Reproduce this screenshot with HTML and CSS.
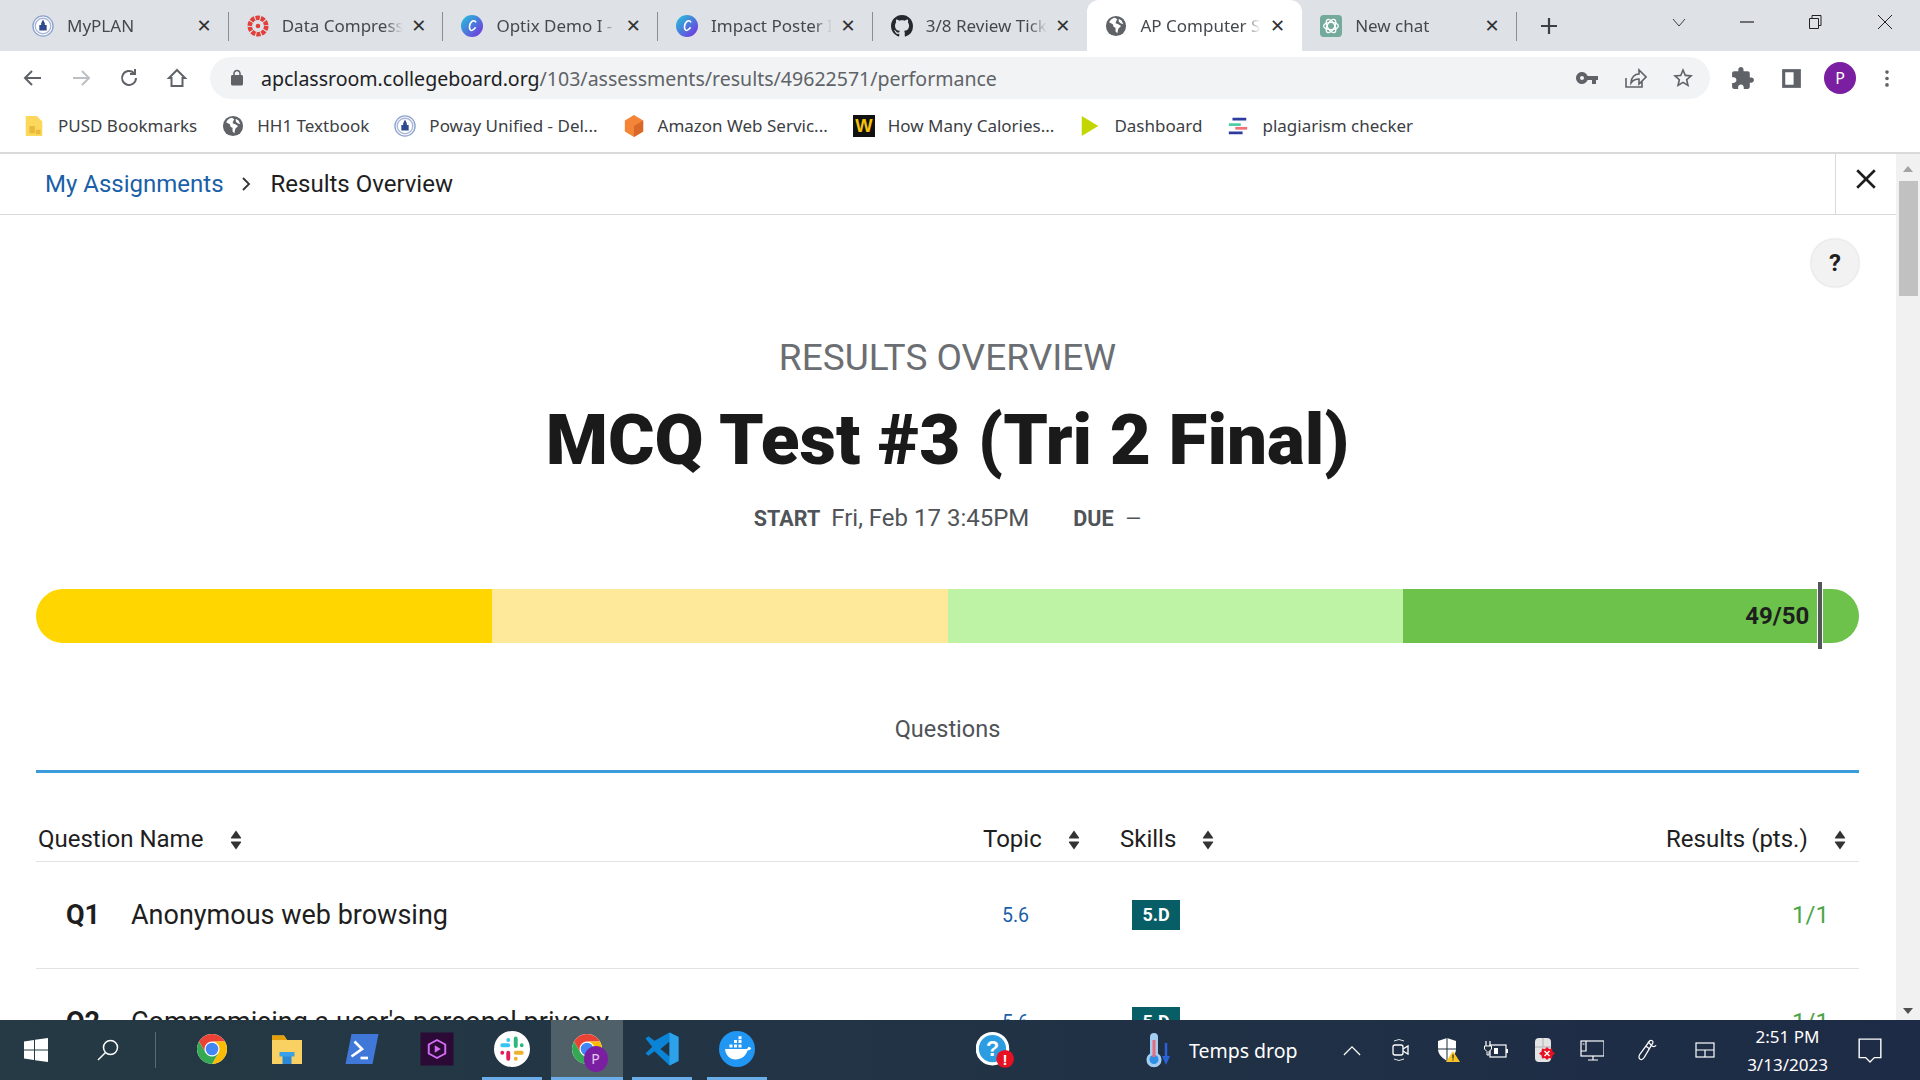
FILE: index.html
```html
<!DOCTYPE html>
<html lang="en">
<head>
    <meta charset="UTF-8">
    <meta name="viewport" content="width=device-width, initial-scale=1.0">
    <title>Results Overview</title>
    <link rel="stylesheet" href="styles.css">
</head>
<body>
    <svg class="defs" width="0" height="0">
        <symbol id="globe" viewBox="0 0 24 24">
            <circle cx="12" cy="12" r="11" fill="#5f6368"/>
            <path d="M11 3c-3 .5-5.5 2.5-6.5 5l4 2 1 3 2 1v4l2 2 1-5 3-3-3-2-3-1 1-3 1-1z" fill="#fff"/>
            <path d="M15 4l3 2 2 4-3-1-2-2z" fill="#fff"/>
        </symbol>
        <symbol id="seal" viewBox="0 0 24 24">
            <circle cx="12" cy="12" r="11" fill="#fff" stroke="#8fa3cf" stroke-width="1.5"/>
            <circle cx="12" cy="12" r="8.5" fill="none" stroke="#a9b7d8" stroke-width="1.5"/>
            <path d="M12 5l2 4v2h2v6H8v-6h2V9z" fill="#2f4a8f"/>
        </symbol>
        <symbol id="canva" viewBox="0 0 24 24">
            <defs>
                <linearGradient id="canva-fill" x1="0" y1="0" x2="1" y2="1">
                    <stop offset="0" stop-color="#1fc8d8"/>
                    <stop offset="1" stop-color="#7a2be0"/>
                </linearGradient>
            </defs>
            <circle cx="12" cy="12" r="12" fill="url(#canva-fill)"/>
            <path d="M16 7.5c-1-2-3.5-1.5-5 .5-2 2.5-2.5 7-.5 8.5 1.5 1 3.5-.5 5-2.5" fill="none" stroke="#fff" stroke-width="1.8" stroke-linecap="round"/>
        </symbol>
        <symbol id="chrome" viewBox="0 0 24 24">
            <circle cx="12" cy="12" r="10" fill="#fff"/>
            <path d="M3.34 7A10 10 0 0 1 20.66 7H12A5 5 0 0 0 7.67 14.5z" fill="#ea4335"/>
            <path d="M12 7H20.66A10 10 0 0 1 12 22L16.33 14.5A5 5 0 0 0 12 7z" fill="#fbbc04"/>
            <path d="M3.34 7L7.67 14.5A5 5 0 0 0 16.33 14.5L12 22A10 10 0 0 1 3.34 7z" fill="#34a853"/>
            <circle cx="12" cy="12" r="4.2" fill="#4285f4"/>
        </symbol>
        <symbol id="sort" viewBox="0 0 12 20">
            <path d="M6 .5L11 7.5Q11.5 8.5 10.5 8.5H1.5Q.5 8.5 1 7.5z" fill="#333"/>
            <path d="M6 19.5L11 12.5Q11.5 11.5 10.5 11.5H1.5Q.5 11.5 1 12.5z" fill="#333"/>
        </symbol>
    </svg>

    <div class="tabstrip">
        <div class="tab sep">
            <svg class="favicon"><use href="#seal"/></svg>
            <span class="tab-title">MyPLAN</span>
            <span class="tab-close">✕</span>
        </div>
        <div class="tab sep">
            <svg class="favicon" viewBox="0 0 24 24">
                <circle cx="12" cy="12" r="9" fill="none" stroke="#e0413a" stroke-width="5" stroke-dasharray="4.5 1.15"/>
                <circle cx="12" cy="12" r="2.5" fill="#e0413a"/>
            </svg>
            <span class="tab-title">Data Compress</span>
            <span class="tab-close">✕</span>
        </div>
        <div class="tab sep">
            <svg class="favicon"><use href="#canva"/></svg>
            <span class="tab-title">Optix Demo I -</span>
            <span class="tab-close">✕</span>
        </div>
        <div class="tab sep">
            <svg class="favicon"><use href="#canva"/></svg>
            <span class="tab-title">Impact Poster I</span>
            <span class="tab-close">✕</span>
        </div>
        <div class="tab">
            <svg class="favicon" viewBox="0 0 16 16">
                <path fill="#24292f" d="M8 0C3.58 0 0 3.58 0 8c0 3.54 2.29 6.53 5.47 7.59.4.07.55-.17.55-.38 0-.19-.01-.82-.01-1.49-2.01.37-2.53-.49-2.69-.94-.09-.23-.48-.94-.82-1.13-.28-.15-.68-.52-.01-.53.63-.01 1.08.58 1.23.82.72 1.21 1.87.87 2.33.66.07-.52.28-.87.51-1.07-1.78-.2-3.64-.89-3.64-3.95 0-.87.31-1.59.82-2.15-.08-.2-.36-1.02.08-2.12 0 0 .67-.21 2.2.82.64-.18 1.32-.27 2-.27.68 0 1.36.09 2 .27 1.53-1.04 2.2-.82 2.2-.82.44 1.1.16 1.92.08 2.12.51.56.82 1.27.82 2.15 0 3.07-1.87 3.75-3.65 3.95.29.25.54.73.54 1.48 0 1.07-.01 1.93-.01 2.2 0 .21.15.46.55.38A8.013 8.013 0 0016 8c0-4.42-3.58-8-8-8z"/>
            </svg>
            <span class="tab-title">3/8 Review Tick</span>
            <span class="tab-close">✕</span>
        </div>
        <div class="tab active">
            <svg class="favicon"><use href="#globe"/></svg>
            <span class="tab-title">AP Computer S</span>
            <span class="tab-close">✕</span>
        </div>
        <div class="tab sep">
            <svg class="favicon" viewBox="0 0 24 24">
                <rect width="24" height="24" rx="4" fill="#74aa9c"/>
                <g fill="none" stroke="#fff" stroke-width="1.4">
                    <ellipse cx="12" cy="12" rx="8" ry="4"/>
                    <ellipse cx="12" cy="12" rx="8" ry="4" transform="rotate(60 12 12)"/>
                    <ellipse cx="12" cy="12" rx="8" ry="4" transform="rotate(120 12 12)"/>
                </g>
            </svg>
            <span class="tab-title">New chat</span>
            <span class="tab-close">✕</span>
        </div>
        <svg class="new-tab" viewBox="0 0 18 18">
            <path d="M9 1v16M1 9h16" stroke="#3c4043" stroke-width="2.2"/>
        </svg>
        <div class="window-btns">
            <svg viewBox="0 0 14 14"><path d="M1 4l6 7 6-7" fill="none" stroke="#3c4043"/></svg>
            <svg viewBox="0 0 14 14"><path d="M0 7h14" stroke="#222" stroke-width="1.2"/></svg>
            <svg viewBox="0 0 14 14"><path d="M1.5 3.5h9v10h-9zM4 3.5v-3h9v10h-2.5" fill="none" stroke="#222"/></svg>
            <svg viewBox="0 0 14 14"><path d="M0 0l14 14M14 0L0 14" stroke="#222"/></svg>
        </div>
    </div>

    <div class="toolbar">
        <svg class="nav-icon" viewBox="0 0 24 24"><path d="M20 12H5M11 5l-7 7 7 7" fill="none" stroke="#5f6368" stroke-width="2"/></svg>
        <svg class="nav-icon" viewBox="0 0 24 24"><path d="M4 12h15M13 5l7 7-7 7" fill="none" stroke="#bcc0c4" stroke-width="2"/></svg>
        <svg class="nav-icon" viewBox="0 0 24 24"><path d="M19 12a7 7 0 1 1-2.1-5M18 3v5h-5" fill="none" stroke="#5f6368" stroke-width="2"/></svg>
        <svg class="nav-icon" viewBox="0 0 24 24"><path d="M12 4l8 8h-2.5v8h-11v-8H4z" fill="none" stroke="#5f6368" stroke-width="2"/></svg>
        <div class="omnibox">
            <svg class="lock" viewBox="0 0 24 24"><path fill="#5f6368" d="M18 8h-1V6c0-2.76-2.24-5-5-5S7 3.24 7 6v2H6c-1.1 0-2 .9-2 2v10c0 1.1.9 2 2 2h12c1.1 0 2-.9 2-2V10c0-1.1-.9-2-2-2zM9 6c0-1.66 1.34-3 3-3s3 1.34 3 3v2H9V6z"/></svg>
            <span class="url"><b>apclassroom.collegeboard.org</b>/103/assessments/results/49622571/performance</span>
            <svg class="omni-icon" viewBox="0 0 24 24"><path fill="#5f6368" d="M12.65 10C11.83 7.67 9.61 6 7 6c-3.31 0-6 2.69-6 6s2.69 6 6 6c2.61 0 4.83-1.67 5.65-4H17v4h4v-4h2v-4H12.65zM7 14c-1.1 0-2-.9-2-2s.9-2 2-2 2 .9 2 2-.9 2-2 2z"/></svg>
            <svg class="omni-icon" viewBox="0 0 24 24"><path d="M3 12v9h16v-6M8 17c0-6 4-9 8-9V4l7 7-7 7v-5c-3 0-6 1-8 4z" fill="none" stroke="#5f6368" stroke-width="1.6"/></svg>
            <svg class="omni-icon" viewBox="0 0 24 24"><path fill="#5f6368" d="M22 9.24l-7.19-.62L12 2 9.19 8.63 2 9.24l5.46 4.73L5.82 21 12 17.27 18.18 21l-1.63-7.03L22 9.24zM12 15.4l-3.76 2.27 1-4.28-3.32-2.88 4.38-.38L12 6.1l1.71 4.04 4.38.38-3.32 2.88 1 4.28L12 15.4z"/></svg>
        </div>
        <div class="toolbar-end">
            <svg viewBox="0 0 24 24"><path fill="#5f6368" d="M20.5 11H19V7c0-1.1-.9-2-2-2h-4V3.5C13 2.12 11.88 1 10.5 1S8 2.12 8 3.5V5H4c-1.1 0-1.99.9-1.99 2v3.8H3.5c1.49 0 2.7 1.21 2.7 2.7s-1.21 2.7-2.7 2.7H2V20c0 1.1.9 2 2 2h3.8v-1.5c0-1.49 1.21-2.7 2.7-2.7 1.49 0 2.7 1.21 2.7 2.7V22H17c1.1 0 2-.9 2-2v-4h1.5c1.38 0 2.5-1.12 2.5-2.5S21.88 11 20.5 11z"/></svg>
            <svg viewBox="0 0 24 24"><path d="M3 3h18v18H3z" fill="#5f6368"/><path d="M6 6h8v12H6z" fill="#fff"/></svg>
            <span class="avatar">P</span>
            <svg viewBox="0 0 24 24"><circle cx="12" cy="5" r="2" fill="#5f6368"/><circle cx="12" cy="12" r="2" fill="#5f6368"/><circle cx="12" cy="19" r="2" fill="#5f6368"/></svg>
        </div>
    </div>

    <div class="bookmarks">
        <div class="bookmark">
            <svg viewBox="0 0 20 24"><path d="M1 1h12l6 6v16H1z" fill="#fbd75b"/><path d="M5 12h6v8H5zM12 16h5v5h-5z" fill="#e9b93a"/></svg>
            <span>PUSD Bookmarks</span>
        </div>
        <div class="bookmark">
            <svg><use href="#globe"/></svg>
            <span>HH1 Textbook</span>
        </div>
        <div class="bookmark">
            <svg><use href="#seal"/></svg>
            <span>Poway Unified - Del...</span>
        </div>
        <div class="bookmark">
            <svg viewBox="0 0 24 24"><path d="M12 0l10 6v12l-10 6L2 18V6z" fill="#f58536"/><path d="M12 12l10-6v12l-10 6z" fill="#d9672a"/></svg>
            <span>Amazon Web Servic...</span>
        </div>
        <div class="bookmark">
            <svg viewBox="0 0 24 24"><rect width="24" height="24" fill="#111"/><text x="12" y="18" text-anchor="middle" class="w-mark">W</text></svg>
            <span>How Many Calories...</span>
        </div>
        <div class="bookmark">
            <svg viewBox="0 0 24 24"><path d="M3 1l18 11L3 23z" fill="#c3d600"/></svg>
            <span>Dashboard</span>
        </div>
        <div class="bookmark">
            <svg viewBox="0 0 24 24"><path d="M6 3h15v3H6zM2 18h15v3H2z" fill="#2f3a9e"/><path d="M2 9h13v3H2z" fill="#52cba8"/><path d="M9 13h13v3H9z" fill="#f2727b"/></svg>
            <span>plagiarism checker</span>
        </div>
    </div>

    <div class="viewport">
        <div class="page">
            <div class="crumbs">
                <a class="crumb-link">My Assignments</a>
                <svg class="crumb-sep" viewBox="0 0 10 16"><path d="M2 2l6 6-6 6" fill="none" stroke="#333" stroke-width="1.8"/></svg>
                <span>Results Overview</span>
                <div class="crumb-close">
                    <svg viewBox="0 0 20 20"><path d="M2 2l16 16M18 2L2 18" stroke="#1e1e1e" stroke-width="2.4"/></svg>
                </div>
            </div>

            <div class="content">
                <div class="help-row"><button class="help-btn">?</button></div>

                <div class="heading">
                    <p class="eyebrow">RESULTS OVERVIEW</p>
                    <h1>MCQ Test #3 (Tri 2 Final)</h1>
                    <p class="dates">
                        <b>START</b><span class="start-val">Fri, Feb 17 3:45PM</span>
                        <b>DUE</b><span class="due-val">—</span>
                    </p>
                </div>

                <div class="score-bar">
                    <div class="seg seg1"></div>
                    <div class="seg seg2"></div>
                    <div class="seg seg3"></div>
                    <div class="seg seg4">
                        <span class="score">49/50</span>
                        <span class="score-tick"></span>
                    </div>
                </div>

                <div class="tab-title-row">Questions</div>

                <div class="row head-row">
                    <div class="cell name-head"><span>Question Name</span><svg class="sort sort-name"><use href="#sort"/></svg></div>
                    <div class="cell"><span>Topic</span><svg class="sort"><use href="#sort"/></svg></div>
                    <div class="cell"><span>Skills</span><svg class="sort"><use href="#sort"/></svg></div>
                    <div class="cell"><span>Results (pts.)</span><svg class="sort"><use href="#sort"/></svg></div>
                </div>
                <div class="row q-row">
                    <div class="cell q-name"><b>Q1</b><span>Anonymous web browsing</span></div>
                    <div class="cell q-topic">5.6</div>
                    <div class="cell q-skill"><span class="badge">5.D</span></div>
                    <div class="cell q-result">1/1</div>
                </div>
                <div class="row q-row">
                    <div class="cell q-name"><b>Q2</b><span>Compromising a user's personal privacy</span></div>
                    <div class="cell q-topic">5.6</div>
                    <div class="cell q-skill"><span class="badge">5.D</span></div>
                    <div class="cell q-result">1/1</div>
                </div>
            </div>
        </div>
        <div class="scrollbar">
            <span class="arrow-up"></span>
            <span class="thumb"></span>
            <span class="arrow-down"></span>
        </div>
    </div>

    <div class="taskbar">
        <div class="task-start">
            <svg viewBox="0 0 24 24"><path d="M0 3.5l10-1.5v9.5H0zM11 1.8L24 0v11.5H11zM0 12.5h10V22L0 20.5zM11 12.5h13V24l-13-1.8z" fill="#fff"/></svg>
        </div>
        <div class="task-search">
            <svg viewBox="0 0 24 24"><circle cx="14.5" cy="9.5" r="7" fill="none" stroke="#fff" stroke-width="1.5"/><path d="M9.5 14.5L2 22" stroke="#fff" stroke-width="1.5"/></svg>
        </div>
        <span class="task-divider"></span>
        <div class="task-apps">
            <div class="task-app"><svg><use href="#chrome"/></svg></div>
            <div class="task-app">
                <svg viewBox="0 0 24 24"><path d="M2 3h8l2 3h10v16H2z" fill="#f9d163"/><path d="M2 3h8l2 3H2z" fill="#e3a008"/><path d="M9 14h6v8H9z" fill="#2b88d8"/><path d="M7 14h10v3H7z" fill="#3aa0e8"/></svg>
            </div>
            <div class="task-app">
                <svg viewBox="0 0 24 24"><path d="M5 2h18l-4 20H1z" fill="#3f78d8"/><path d="M7 7l5 5-7 5" fill="none" stroke="#fff" stroke-width="1.8"/><path d="M11 18h5" stroke="#fff" stroke-width="1.8"/></svg>
            </div>
            <div class="task-app">
                <svg viewBox="0 0 24 24"><rect x="1" y="1" width="22" height="22" fill="#2b0a36"/><path d="M12 6l5.5 3v6L12 18l-5.5-3V9z" fill="none" stroke="#d46cf5" stroke-width="1.3"/><path d="M10.5 9.5l4 2.5-4 2.5z" fill="#d46cf5"/></svg>
            </div>
            <div class="task-app open">
                <svg viewBox="0 0 24 24">
                    <circle cx="12" cy="12" r="12" fill="#fff"/>
                    <g stroke-width="2.6" stroke-linecap="round" fill="none">
                        <path d="M9.5 6v0M5.5 9.5h4" stroke="#36c5f0"/>
                        <path d="M14.5 5v5M18.5 9.5h0" stroke="#2eb67d"/>
                        <path d="M14.5 14.5h4M14.5 18.5h0" stroke="#ecb22e"/>
                        <path d="M9.5 14.5v4M5.5 14.5h0" stroke="#e01e5a"/>
                    </g>
                </svg>
            </div>
            <div class="task-app active">
                <svg><use href="#chrome"/></svg>
                <span class="task-badge">P</span>
            </div>
            <div class="task-app open">
                <svg viewBox="0 0 24 24"><path d="M17 1l6 3v16l-6 3-10-9.5-4 3-2-1.5 4.5-4.5L1 5l2-1.5 4 3zM17 7l-6 5 6 5z" fill="#0b84d6"/><path d="M17 1l6 3v16l-6 3z" fill="#2da2ea"/></svg>
            </div>
            <div class="task-app open">
                <svg viewBox="0 0 24 24"><circle cx="12" cy="12" r="12" fill="#2196f3"/><path d="M4 12h14c1 0 1.5-1 1.5-1.5 1 0 1.5.5 2 1-.5 1-1.5 1.5-2.5 1.5-1 3.5-4 6-8 6-4 0-6.5-3-7-7z" fill="#fff"/><path d="M7 9h2v2H7zM10 9h2v2h-2zM13 9h2v2h-2zM10 6h2v2h-2zM13 6h2v2h-2zM13 3.5h2v2h-2z" fill="#fff"/></svg>
            </div>
        </div>
        <div class="task-help">
            <svg viewBox="0 0 30 30">
                <circle cx="13" cy="14" r="12" fill="#2c9de0" stroke="#fff" stroke-width="2.5"/>
                <text x="13" y="20" text-anchor="middle" class="help-mark">?</text>
                <circle cx="23" cy="22" r="7" fill="#e81123"/>
                <text x="23" y="26.5" text-anchor="middle" class="alert-mark">!</text>
            </svg>
        </div>
        <div class="task-weather">
            <svg viewBox="0 0 26 36">
                <path d="M5 5a4 4 0 0 1 8 0v16.5a7.5 7.5 0 1 1-8 0z" fill="#a5cdf0"/>
                <circle cx="9" cy="27.5" r="4.5" fill="#2f8fe6"/>
                <path d="M7.5 8h3v17h-3z" fill="#e86a7d"/>
                <path d="M21 11v15" stroke="#2a62d8" stroke-width="2.5"/>
                <path d="M17 24h8l-4 9z" fill="#2a62d8"/>
            </svg>
            <span>Temps drop</span>
        </div>
        <div class="tray">
            <div class="tray-slot tray-chevron">
                <svg viewBox="0 0 20 12"><path d="M1 11l9-9 9 9" fill="none" stroke="#fff" stroke-width="1.4"/></svg>
            </div>
            <div class="tray-slot">
                <svg viewBox="0 0 24 24"><path d="M6 3q5-3 10 0M6 21q5 3 10 0" fill="none" stroke="#dfe3e6"/><rect x="5" y="7" width="10" height="10" rx="2" fill="none" stroke="#fff" stroke-width="1.3"/><path d="M15 11l5-3v8l-5-3" fill="none" stroke="#fff" stroke-width="1.3"/></svg>
            </div>
            <div class="tray-slot">
                <svg viewBox="0 0 24 24"><path d="M11 0l9 3v8c0 5-4 9-9 12-5-3-9-7-9-12V3z" fill="#fff"/><path d="M11 0v23M2 11h18" stroke="#1e2f3c"/><path d="M17 13l7 11H10z" fill="#f7c325"/><path d="M17 16.5v4M17 21.5v1" stroke="#222" stroke-width="1.2"/></svg>
            </div>
            <div class="tray-slot">
                <svg viewBox="0 0 24 24"><rect x="6" y="7" width="16" height="12" fill="none" stroke="#fff" stroke-width="1.2"/><path d="M22 11h2v4h-2z" fill="#fff"/><path d="M10 10h4v6h-4z" fill="#fff"/><path d="M2 3v5M6 3v5" stroke="#fff" stroke-width="1.2"/><path d="M.5 8h7v3L5 13.5V17H3v-3.500L.5 11z" fill="#1e2f3c" stroke="#fff"/></svg>
            </div>
            <div class="tray-slot">
                <svg viewBox="0 0 24 24"><rect x="3" y="0" width="16" height="24" rx="4" fill="#e3e3e3"/><path d="M3 9h16M11 0v9" stroke="#b0b0b0"/><path d="M15 9l2 2 3-.5.5 3 2.5 2-2.5 2-.5 3-3-.5-2 2-2-2-3 .5-.5-3-2.5-2 2.5-2 .5-3 3 .5z" fill="#e81123"/><path d="M12.5 13l5 5M17.5 13l-5 5" stroke="#fff" stroke-width="1.4"/></svg>
            </div>
            <div class="tray-slot">
                <svg viewBox="0 0 24 24"><rect x="1" y="3" width="23" height="15" fill="none" stroke="#fff" stroke-width="1.2"/><path d="M6 3v10H1" fill="none" stroke="#fff" stroke-width="1.2"/><path d="M2.5 6h2" stroke="#fff"/><path d="M13 18v4M8 22h10" stroke="#fff" stroke-width="1.2"/></svg>
            </div>
            <div class="tray-slot tray-pen">
                <svg viewBox="0 0 24 24"><path d="M15 2c2-1 4 0 3.5 2L9 20c-1 2-3 3-4.500 2S3 19 4 17z" fill="none" stroke="#fff" stroke-width="1.3"/><path d="M13 3l5 5c2 1 3 0 4-1M11 8l4 3" fill="none" stroke="#fff" stroke-width="1.3"/></svg>
            </div>
            <div class="tray-slot tray-kbd">
                <svg viewBox="0 0 24 24"><rect x="3" y="5" width="18" height="14" fill="none" stroke="#fff" stroke-width="1.2"/><path d="M3 12h18M12 12v7" stroke="#fff" stroke-width="1.2"/></svg>
            </div>
            <div class="clock"><span>2:51 PM</span><span>3/13/2023</span></div>
            <div class="tray-slot tray-note">
                <svg viewBox="0 0 24 24"><path d="M2 2h20v17h-6l-4 4-4-4H2z" fill="none" stroke="#fff" stroke-width="1.3"/></svg>
            </div>
        </div>
    </div>
</body>
</html>
```

FILE: styles.css
```css
* {
    margin: 0;
    padding: 0;
    box-sizing: border-box;
}
body {
    width: 1920px;
    height: 1080px;
    overflow: hidden;
    display: flex;
    flex-direction: column;
    font-family: 'Roboto', sans-serif;
    background: white;
}
.defs {
    display: block;
    height: 0;
}

/* browser chrome */
.tabstrip {
    height: 51px;
    background: #dee1e6;
    display: flex;
    align-items: stretch;
    padding-left: 14px;
    font-family: 'Noto Sans', sans-serif;
    flex-shrink: 0;
}
.tab {
    width: 214.7px;
    display: flex;
    align-items: center;
    padding-left: 18px;
    color: #45494e;
    font-size: 17px;
    position: relative;
}
.tab.sep::after {
    content: '';
    position: absolute;
    right: 0;
    top: 12px;
    height: 29px;
    width: 1px;
    background: #8a8d91;
}
.tab.active {
    background: white;
    border-radius: 12px 12px 0 0;
}
.favicon {
    width: 22px;
    height: 22px;
    flex-shrink: 0;
    margin-right: 13px;
}
.tab-title {
    width: 121px;
    overflow: hidden;
    white-space: nowrap;
    -webkit-mask-image: linear-gradient(to right, black 85%, transparent);
    mask-image: linear-gradient(to right, black 85%, transparent);
}
.tab-close {
    width: 32px;
    text-align: center;
    font-size: 18px;
    font-weight: bold;
    color: #333;
    font-family: 'DejaVu Sans', sans-serif;
}
.new-tab {
    width: 18px;
    height: 18px;
    margin: 17px 0 0 23px;
}
.window-btns {
    margin-left: auto;
    display: flex;
    align-items: center;
    padding-right: 28px;
    gap: 54px;
}
.window-btns svg {
    width: 14px;
    height: 14px;
    margin-top: -7px;
}
.window-btns svg:last-child {
    margin-left: 2px;
}
.toolbar {
    height: 48px;
    padding: 6px 0 0 21px;
    display: flex;
    align-items: flex-start;
    flex-shrink: 0;
}
.nav-icon {
    width: 24px;
    height: 24px;
    margin: 9px 24px 0 0;
}
.omnibox {
    width: 1500px;
    height: 42px;
    margin-left: -3px;
    border-radius: 21px;
    background: #f1f3f4;
    display: flex;
    align-items: center;
    padding: 0 15px 0 18px;
}
.lock {
    width: 18px;
    height: 18px;
    margin-right: 15px;
}
.url {
    font-family: 'Noto Sans', sans-serif;
    font-size: 19.55px;
    color: #5f6368;
    flex: 1;
    white-space: nowrap;
}
.url b {
    font-weight: normal;
    color: #202124;
}
.omni-icon {
    width: 24px;
    height: 24px;
    margin-left: 24px;
}
.toolbar-end {
    display: flex;
    align-items: center;
    height: 42px;
    margin-left: 20px;
    gap: 24px;
}
.toolbar-end svg {
    width: 25px;
    height: 25px;
}
.toolbar-end svg:last-child {
    width: 22px;
    margin-left: -4px;
}
.avatar {
    width: 32px;
    height: 32px;
    margin-left: -4px;
    border-radius: 50%;
    background: #7b1fa2;
    color: white;
    font-size: 16px;
    font-family: 'Noto Sans', sans-serif;
    display: flex;
    align-items: center;
    justify-content: center;
}
.bookmarks {
    height: 55px;
    padding-left: 23px;
    display: flex;
    align-items: center;
    font-family: 'Noto Sans', sans-serif;
    font-size: 17px;
    color: #3c4043;
    border-bottom: 2px solid #d9dadc;
    flex-shrink: 0;
}
.bookmark {
    display: flex;
    align-items: center;
    gap: 13px;
    white-space: nowrap;
    margin-right: 25px;
}
.bookmark svg {
    width: 22px;
    height: 22px;
}
.w-mark {
    font: bold 20px 'Liberation Sans', sans-serif;
    fill: #f4c20d;
}

/* page */
.viewport {
    flex: 1;
    display: flex;
    min-height: 0;
}
.page {
    flex: 1;
    min-width: 0;
    overflow: hidden;
}
.crumbs {
    height: 61px;
    border-bottom: 1px solid #d9d9d9;
    padding-left: 45px;
    display: flex;
    align-items: center;
    font-size: 24px;
    color: #1e1e1e;
}
.crumb-link {
    color: #1a5fa8;
}
.crumb-sep {
    width: 10px;
    height: 16px;
    margin: 0 20px 0 17px;
}
.crumb-close {
    margin-left: auto;
    width: 61px;
    align-self: stretch;
    border-left: 1px solid #d9d9d9;
    display: flex;
    align-items: center;
    justify-content: center;
    padding-bottom: 10px;
}
.crumb-close svg {
    width: 22px;
    height: 22px;
}
.content {
    padding: 0 37px 0 36px;
}
.help-row {
    display: flex;
    justify-content: flex-end;
    padding: 24px 0 0;
    height: 122px;
}
.help-btn {
    width: 48px;
    height: 48px;
    border: none;
    border-radius: 50%;
    background: #f2f2f2;
    box-shadow: 0 0 2px rgba(0, 0, 0, 0.25);
    font: bold 24px 'Roboto', sans-serif;
    color: #1e1e1e;
}
.heading {
    text-align: center;
}
.eyebrow {
    font-size: 37px;
    line-height: 42px;
    color: #6b6e72;
}
h1 {
    font-size: 71px;
    line-height: 84px;
    margin-top: 19px;
    font-weight: 900;
    color: #1a1a1a;
}
.dates {
    margin-top: 22px;
    font-size: 24px;
    line-height: 28px;
    color: #505357;
}
.dates b {
    font-size: 21.5px;
}
.start-val {
    margin: 0 38px 0 11px;
}
.due-val {
    margin-left: 12px;
    font-size: 20px;
}
.score-bar {
    margin-top: 56px;
    height: 54px;
    display: flex;
    border-radius: 27px;
}
.seg {
    flex: 1;
}
.seg1 {
    background: #ffd600;
    border-radius: 27px 0 0 27px;
}
.seg2 {
    background: #fee99b;
}
.seg3 {
    background: #bef3a6;
}
.seg4 {
    background: #6cc24a;
    border-radius: 0 27px 27px 0;
    position: relative;
    display: flex;
    align-items: center;
}
.score {
    margin-left: 342px;
    font-size: 24px;
    font-weight: bold;
    color: #1e1e1e;
}
.score-tick {
    position: absolute;
    left: 415px;
    top: -7px;
    width: 4px;
    height: 67px;
    background: #53565a;
    box-shadow: -1px 0 0 white, 1px 0 0 white;
}
.tab-title-row {
    margin-top: 72px;
    height: 58px;
    text-align: center;
    font-size: 23.5px;
    line-height: 28px;
    color: #505357;
    border-bottom: 3px solid #3b9cdc;
}
.row {
    display: grid;
    grid-template-columns: 947px 137px 546px 193px;
    border-bottom: 1px solid #e2e2e2;
    align-items: center;
}
.head-row {
    height: 89px;
    align-items: end;
    padding-bottom: 8px;
    font-size: 24px;
    line-height: 28px;
    color: #1e1e1e;
}
.name-head {
    padding-left: 2px;
}
.sort {
    width: 12px;
    height: 20px;
    margin-left: 26px;
    vertical-align: -3px;
}
.sort-name {
    margin-left: 27px;
}
.q-row {
    height: 107px;
}
.q-name {
    padding-left: 30px;
    display: flex;
    align-items: center;
    font-size: 27px;
    color: #1e1e1e;
}
.q-name b {
    width: 65px;
}
.q-topic {
    padding-left: 19px;
    font-size: 19.5px;
    color: #1a5fa8;
}
.q-skill {
    padding-left: 12px;
}
.badge {
    display: inline-block;
    width: 48px;
    height: 30px;
    line-height: 30px;
    text-align: center;
    background: #075e66;
    color: white;
    font-size: 18px;
    font-weight: bold;
}
.q-result {
    text-align: right;
    padding-right: 30px;
    font-size: 24px;
    color: #4ca54a;
}
.scrollbar {
    width: 24px;
    background: #f1f1f1;
    position: relative;
}
.thumb {
    position: absolute;
    left: 3px;
    right: 2px;
    top: 27px;
    height: 115px;
    background: #c1c1c1;
}
.arrow-up,
.arrow-down {
    position: absolute;
    left: 7px;
    border-left: 5px solid transparent;
    border-right: 5px solid transparent;
}
.arrow-up {
    top: 12px;
    border-bottom: 6px solid #a3a3a3;
}
.arrow-down {
    bottom: 6px;
    border-top: 6px solid #505050;
}

/* taskbar */
.taskbar {
    height: 60px;
    flex-shrink: 0;
    display: flex;
    align-items: stretch;
    background: linear-gradient(to right, #253a44, #1d2b46);
    color: white;
    font-family: 'Noto Sans', sans-serif;
}
.task-start {
    width: 71px;
    display: flex;
    align-items: center;
    justify-content: center;
}
.task-start svg {
    width: 24px;
    height: 24px;
}
.task-search {
    width: 74px;
    display: flex;
    align-items: center;
    justify-content: center;
}
.task-search svg {
    width: 24px;
    height: 24px;
}
.task-divider {
    width: 1px;
    margin: 12px 0 12px 10px;
    background: #5a6a74;
}
.task-apps {
    display: flex;
    margin-left: 18px;
}
.task-app {
    width: 60px;
    margin: 0 7.5px;
    display: flex;
    align-items: center;
    justify-content: center;
    border-bottom: 3px solid transparent;
    position: relative;
}
.task-app svg {
    width: 36px;
    height: 36px;
}
.task-app.open {
    border-color: #6bade8;
}
.task-app.active {
    width: 72px;
    margin: 0 1.5px;
    background: #4f6068;
    border-color: #6bade8;
}
.task-badge {
    position: absolute;
    left: 33px;
    top: 26px;
    width: 24px;
    height: 26px;
    border-radius: 50%;
    background: #7b1fa2;
    color: #e6c6f2;
    font-size: 14px;
    line-height: 26px;
    text-align: center;
}
.task-help {
    width: 40px;
    margin-left: 201px;
    display: flex;
    align-items: center;
    justify-content: center;
}
.task-help svg {
    width: 38px;
    height: 38px;
}
.help-mark {
    font: bold 17px 'Liberation Sans', sans-serif;
    fill: #fff;
}
.alert-mark {
    font: bold 12px 'Liberation Sans', sans-serif;
    fill: #fff;
}
.task-weather {
    margin-left: 130px;
    display: flex;
    align-items: center;
    gap: 18px;
    font-size: 19.5px;
}
.task-weather svg {
    width: 26px;
    height: 36px;
}
.tray {
    margin-left: auto;
    display: flex;
    align-items: center;
}
.tray-slot {
    width: 48px;
    display: flex;
    justify-content: center;
}
.tray-slot svg {
    width: 24px;
    height: 24px;
}
.tray-chevron svg {
    width: 18px;
    height: 11px;
}
.tray-pen {
    margin-left: 7px;
}
.tray-pen svg {
    width: 22px;
    height: 22px;
}
.tray-kbd {
    margin-left: 10px;
}
.clock {
    width: 117px;
    display: flex;
    flex-direction: column;
    align-items: center;
    gap: 6px;
    padding-top: 2px;
    font-size: 17px;
    line-height: 22px;
}
.tray-note {
    margin-right: 26px;
}
.tray-note svg {
    width: 26px;
    height: 26px;
}
```
